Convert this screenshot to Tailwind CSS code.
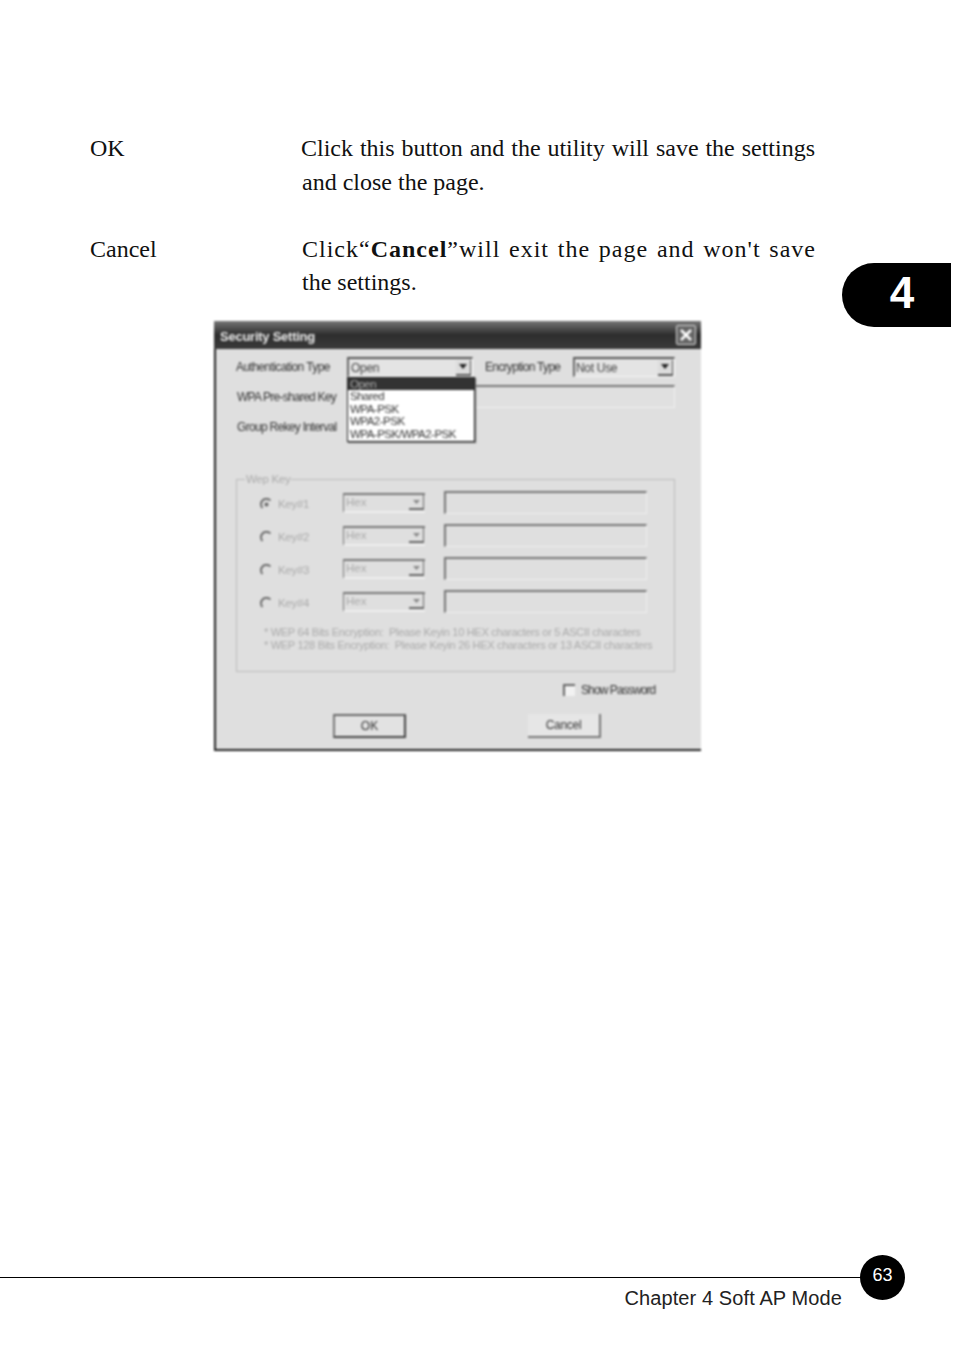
<!DOCTYPE html>
<html>
<head>
<meta charset="utf-8">
<script src="https://cdn.jsdelivr.net/npm/@tailwindcss/browser@4"></script>
</head>
<body class="bg-white">
<div class="relative w-[954px] h-[1351px] overflow-hidden bg-white text-[#111] flex flex-col font-['Liberation_Serif',serif]">

  <div class="pt-[131px] pl-[90px] text-[24px] leading-[34px]">
    <div class="grid grid-cols-[211px_514px]">
      <div>OK</div>
      <div>
        <div class="text-justify [text-align-last:justify]">Click this button and the utility will save the settings</div>
        <div class="pl-px">and close the page.</div>
      </div>
    </div>
    <div class="grid grid-cols-[212px_514px] mt-[33px]">
      <div>Cancel</div>
      <div>
        <div class="text-justify [text-align-last:justify] tracking-[1px]">Click“<b>Cancel</b>”will exit the page and won't save</div>
        <div class="-mt-px">the settings.</div>
      </div>
    </div>
  </div>

  <div class="ml-[214px] mt-[22px] w-[487px] h-[430px] bg-[#dfdfdf] border-l-2 border-b-2 border-[#222] flex flex-col blur-[0.8px] font-['Liberation_Sans',sans-serif] text-[12px] text-[#333] whitespace-nowrap">
    <div class="-ml-[2px] h-[28px] shrink-0 flex items-center justify-between pl-[6px] pr-[5px] bg-gradient-to-b from-[#777] via-[#2e2e2e] to-[#3a3a3a]">
      <span class="text-[13px] font-bold text-[#eee] tracking-[-0.25px] pt-[4px]">Security Setting</span>
      <span class="w-[20px] h-[20px] flex items-center justify-center bg-[#666] border border-[#ddd] rounded-[2px]">
        <svg width="14" height="14" viewBox="0 0 14 14"><path d="M2 2 12 12M12 2 2 12" stroke="#fff" stroke-width="2.5"/></svg>
      </span>
    </div>

    <div class="relative pl-[20px] flex-1 flex flex-col">
      <div class="flex items-center h-[20px] mt-[8px]">
        <span class="w-[111px] tracking-[-0.6px]">Authentication Type</span>
        <span class="w-[126px] h-[20px] bg-[#e4e4e4] border-t-2 border-l-2 border-t-[#555] border-l-[#666] border-b border-r border-[#f4f4f4] flex items-center justify-between pl-[2px] pr-[1px] text-[#444]">
          <span class="tracking-[-0.3px]">Open</span>
          <span class="w-[15px] h-[16px] bg-[#dcdcdc] border-b-2 border-r border-[#555] flex items-center justify-center"><svg width="8" height="5" viewBox="0 0 8 5"><path d="M0 0h8L4 5z" fill="#222"/></svg></span>
        </span>
        <span class="w-[100px] pl-[12px] tracking-[-0.7px]">Encryption Type</span>
        <span class="w-[102px] h-[20px] bg-[#e4e4e4] border-t-2 border-l-2 border-t-[#555] border-l-[#666] border-b border-r border-[#f4f4f4] flex items-center justify-between pl-[1px] pr-[1px] text-[#444]">
          <span class="tracking-[-0.3px]">Not Use</span>
          <span class="w-[15px] h-[16px] bg-[#dcdcdc] border-b-2 border-r border-[#555] flex items-center justify-center"><svg width="8" height="5" viewBox="0 0 8 5"><path d="M0 0h8L4 5z" fill="#222"/></svg></span>
        </span>
      </div>

      <div class="flex items-center h-[23px] mt-[8px]">
        <span class="w-[111px] tracking-[-0.75px] pl-px">WPA Pre-shared Key</span>
        <span class="w-[328px] h-[23px] bg-[#e0e0e0] border-t-2 border-[#777] border-b border-r border-b-[#efefef] border-r-[#efefef]"></span>
      </div>

      <div class="flex items-center h-[20px] mt-[9px]">
        <span class="tracking-[-0.7px] pl-px">Group Rekey Interval</span>
      </div>

      <div class="absolute left-[131px] top-[28px] w-[128px] h-[65px] bg-white border border-[#222] text-[11.5px] leading-[12.5px] text-[#333] tracking-[-0.5px] shadow-[1px_1px_1px_#777]">
        <div class="bg-[#333] text-[#aaa] pl-[2px] h-[12px]">Open</div>
        <div class="pl-[2px]">Shared</div>
        <div class="pl-[2px]">WPA-PSK</div>
        <div class="pl-[2px]">WPA2-PSK</div>
        <div class="pl-[2px]">WPA-PSK/WPA2-PSK</div>
      </div>

      <div class="relative mt-[42px] w-[439px] h-[193px] border border-[#bcbcbc] pt-[8px] pl-[23px] text-[#aaa] text-[11.5px]">
        <span class="absolute -top-[7px] left-[8px] bg-[#dfdfdf] px-[1px] leading-[13px] tracking-[-0.3px]">Wep Key</span>

        <div class="h-[33px] flex items-center">
          <svg class="shrink-0" width="13" height="13" viewBox="0 0 13 13"><path d="M10.5 2.5A5.3 5.3 0 0 0 2.5 10" fill="none" stroke="#666" stroke-width="1.8"/><circle cx="6.5" cy="6.5" r="2" fill="#666"/></svg>
          <span class="w-[65px] ml-[5px] tracking-[-0.3px]">Key#1</span>
          <span class="w-[82px] h-[20px] mb-[4px] bg-[#dfdfdf] border-t-2 border-l border-[#777] border-b-2 border-b-[#eee] flex items-center justify-between pl-[2px] pr-[1px]">
            <span>Hex</span>
            <span class="w-[15px] h-[15px] border-r border-b-2 border-[#666] flex items-center justify-center"><svg width="7" height="4" viewBox="0 0 7 4"><path d="M0 0h7L3.500 4z" fill="#888"/></svg></span>
          </span>
          <span class="w-[203px] h-[23px] ml-[19px] mb-[4px] border-t-2 border-l-2 border-[#777] border-b border-r border-b-[#efefef] border-r-[#efefef]"></span>
        </div>
        <div class="h-[33px] flex items-center">
          <svg class="shrink-0" width="13" height="13" viewBox="0 0 13 13"><path d="M10.5 2.5A5.3 5.3 0 0 0 2.5 10" fill="none" stroke="#666" stroke-width="1.8"/></svg>
          <span class="w-[65px] ml-[5px] tracking-[-0.3px]">Key#2</span>
          <span class="w-[82px] h-[20px] mb-[4px] bg-[#dfdfdf] border-t-2 border-l border-[#777] border-b-2 border-b-[#eee] flex items-center justify-between pl-[2px] pr-[1px]">
            <span>Hex</span>
            <span class="w-[15px] h-[15px] border-r border-b-2 border-[#666] flex items-center justify-center"><svg width="7" height="4" viewBox="0 0 7 4"><path d="M0 0h7L3.500 4z" fill="#888"/></svg></span>
          </span>
          <span class="w-[203px] h-[23px] ml-[19px] mb-[4px] border-t-2 border-l-2 border-[#777] border-b border-r border-b-[#efefef] border-r-[#efefef]"></span>
        </div>
        <div class="h-[33px] flex items-center">
          <svg class="shrink-0" width="13" height="13" viewBox="0 0 13 13"><path d="M10.5 2.5A5.3 5.3 0 0 0 2.5 10" fill="none" stroke="#666" stroke-width="1.8"/></svg>
          <span class="w-[65px] ml-[5px] tracking-[-0.3px]">Key#3</span>
          <span class="w-[82px] h-[20px] mb-[4px] bg-[#dfdfdf] border-t-2 border-l border-[#777] border-b-2 border-b-[#eee] flex items-center justify-between pl-[2px] pr-[1px]">
            <span>Hex</span>
            <span class="w-[15px] h-[15px] border-r border-b-2 border-[#666] flex items-center justify-center"><svg width="7" height="4" viewBox="0 0 7 4"><path d="M0 0h7L3.500 4z" fill="#888"/></svg></span>
          </span>
          <span class="w-[203px] h-[23px] ml-[19px] mb-[4px] border-t-2 border-l-2 border-[#777] border-b border-r border-b-[#efefef] border-r-[#efefef]"></span>
        </div>
        <div class="h-[33px] flex items-center">
          <svg class="shrink-0" width="13" height="13" viewBox="0 0 13 13"><path d="M10.5 2.5A5.3 5.3 0 0 0 2.5 10" fill="none" stroke="#666" stroke-width="1.8"/></svg>
          <span class="w-[65px] ml-[5px] tracking-[-0.3px]">Key#4</span>
          <span class="w-[82px] h-[20px] mb-[4px] bg-[#dfdfdf] border-t-2 border-l border-[#777] border-b-2 border-b-[#eee] flex items-center justify-between pl-[2px] pr-[1px]">
            <span>Hex</span>
            <span class="w-[15px] h-[15px] border-r border-b-2 border-[#666] flex items-center justify-center"><svg width="7" height="4" viewBox="0 0 7 4"><path d="M0 0h7L3.500 4z" fill="#888"/></svg></span>
          </span>
          <span class="w-[203px] h-[23px] ml-[19px] mb-[4px] border-t-2 border-l-2 border-[#777] border-b border-r border-b-[#efefef] border-r-[#efefef]"></span>
        </div>

        <div class="mt-[6px] ml-[4px] leading-[13px] text-[11px] tracking-[-0.3px]">
          <div>* WEP 64 Bits Encryption:&nbsp; Please Keyin 10 HEX characters or 5 ASCII characters</div>
          <div>* WEP 128 Bits Encryption:&nbsp; Please Keyin 26 HEX characters or 13 ASCII characters</div>
        </div>
      </div>

      <div class="flex items-center h-[12px] mt-[12px] ml-[327px]">
        <span class="w-[12px] h-[12px] bg-[#f2f2f2] border-t-2 border-l-2 border-[#666]"></span>
        <span class="ml-[6px] text-[#333] tracking-[-0.9px]">Show Password</span>
      </div>

      <div class="flex mt-[18px] ml-[97px]">
        <span class="w-[73px] h-[24px] flex items-center justify-center bg-[#e2e2e2] border-2 border-[#444] border-t-[#666] border-l-[#777] text-[#333]">OK</span>
        <span class="w-[73px] h-[24px] ml-[122px] flex items-center justify-center bg-[#e6e6e6] border-r-2 border-b-2 border-[#777] text-[#333] tracking-[-0.3px]">Cancel</span>
      </div>
    </div>
  </div>

  <div class="mt-auto mb-[41px] font-['Liberation_Sans',sans-serif]">
    <div class="flex items-center h-[45px]">
      <div class="flex-1 h-px bg-black"></div>
      <div class="w-[45px] h-[45px] mr-[49px] rounded-full bg-black text-white text-[18px] flex items-center justify-center pb-[4px]">63</div>
    </div>
    <div class="-mt-[14px] pr-[112px] text-right text-[20px] leading-[24px] tracking-[0.1px] text-[#222]">Chapter 4 Soft AP Mode</div>
  </div>

  <div class="absolute left-[842px] top-[263px] w-[109px] h-[64px] rounded-l-[32px] bg-black text-white font-['Liberation_Sans',sans-serif] font-bold text-[44px] flex items-center justify-center pl-[11px] pb-[4px]">4</div>
</div>
</body>
</html>
